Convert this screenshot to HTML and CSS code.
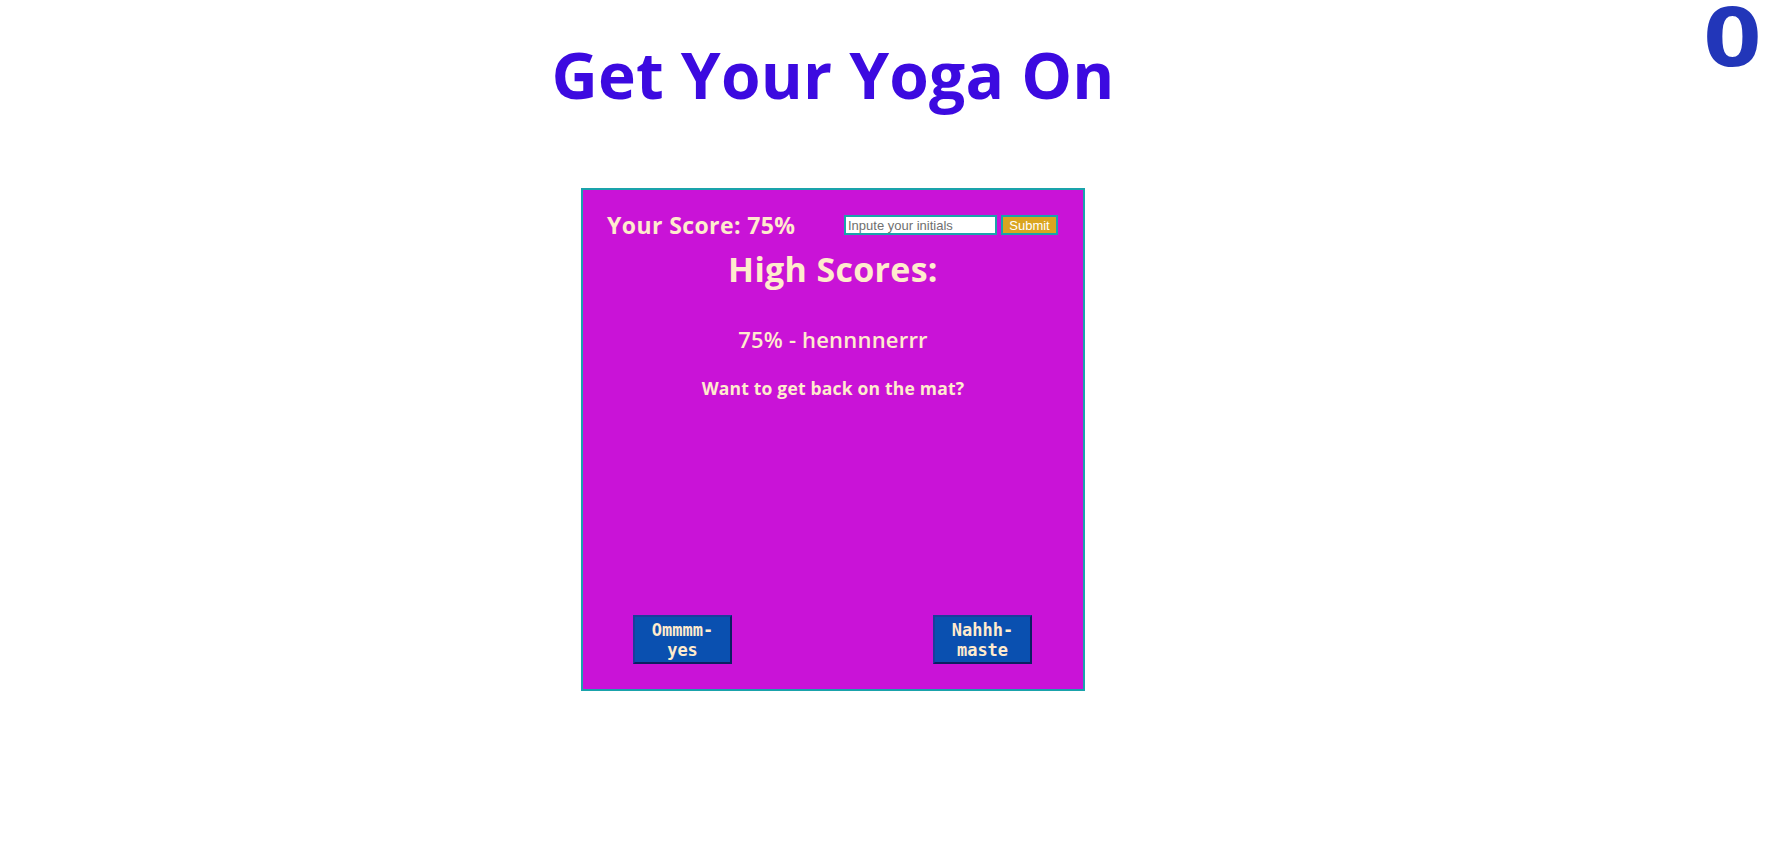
FILE: index.html
```html
<!DOCTYPE html>
<html lang="en">
<head>
<meta charset="utf-8">
<title>Get Your Yoga On</title>
<link rel="stylesheet" href="styles.css">
</head>
<body>
<div class="page">
  <main class="main">
    <h1 class="title">Get Your Yoga On</h1>
    <section class="card">
      <div class="score-row">
        <h3 class="your-score">Your Score: 75%</h3>
        <form class="initials-form">
          <input class="initials-input" type="text" placeholder="Inpute your initials">
          <button class="submit-btn" type="button">Submit</button>
        </form>
      </div>
      <h2 class="high-title">High Scores:</h2>
      <p class="high-entry">75% - hennnnerrr</p>
      <p class="again">Want to get back on the mat?</p>
      <div class="spacer"></div>
      <div class="btn-row">
        <button class="choice-btn" type="button">Ommmm-yes</button>
        <button class="choice-btn" type="button">Nahhh-maste</button>
      </div>
    </section>
  </main>
  <div class="timer"><span class="timer-digit">0</span></div>
</div>
</body>
</html>
```

FILE: styles.css
```css
html, body {
  margin: 0;
  padding: 0;
  background: #ffffff;
}

body {
  padding: 0 8px;
  font-family: "Open Sans", "Liberation Sans", sans-serif;
}

.page {
  display: flex;
  align-items: flex-start;
}

.main {
  flex: 0 0 1650px;
  display: flex;
  flex-direction: column;
  align-items: center;
}

.title {
  margin: 33px 0 0;
  font-size: 64px;
  line-height: 84px;
  font-weight: 700;
  color: #3c0ae0;
  letter-spacing: 0.2px;
}

.timer {
  flex: 1;
  text-align: right;
  font-family: "Open Sans", "Liberation Sans", sans-serif;
  font-weight: 700;
  font-size: 83px;
  line-height: 68px;
  color: #2236b9;
}

.timer-digit {
  display: inline-block;
  transform: scaleX(1.22);
  transform-origin: right center;
  margin-right: 1px;
}

.card {
  margin-top: 71px;
  width: 500px;
  height: 499px;
  background: #c913d7;
  border: 2px solid #1aa3ab;
  display: flex;
  flex-direction: column;
  align-items: center;
  color: #ffebcd;
}

.score-row {
  align-self: stretch;
  display: flex;
  justify-content: space-between;
  align-items: center;
  padding: 22px 25px 0 24px;
}

.your-score {
  margin: 0;
  font-size: 23px;
  line-height: 26px;
  font-weight: 700;
  letter-spacing: 0.4px;
}

.initials-form {
  display: flex;
  gap: 4px;
  margin: 0;
}

.initials-input {
  box-sizing: border-box;
  width: 153px;
  height: 20px;
  margin: 0;
  padding: 0 2px;
  border: 2px solid #1aa3ab;
  background: #ffffff;
  font-family: "Liberation Sans", Arial, sans-serif;
  font-size: 13px;
  color: #333;
  outline: none;
}

.initials-input::placeholder {
  color: #6f6f6f;
}

.submit-btn {
  box-sizing: border-box;
  width: 57px;
  height: 20px;
  margin: 0;
  padding: 0;
  border: 2px solid #1aa3ab;
  background: #daa520;
  color: #ffffff;
  font-family: "Liberation Sans", Arial, sans-serif;
  font-size: 13px;
}

.high-title {
  margin: 11px 0 0;
  font-size: 34px;
  line-height: 40px;
  font-weight: 700;
  letter-spacing: 0.3px;
}

.high-entry {
  margin: 35px 0 0;
  font-size: 22px;
  line-height: 30px;
  font-weight: 600;
  letter-spacing: 0.2px;
}

.again {
  margin: 22px 0 0;
  font-size: 17.5px;
  line-height: 24px;
  font-weight: 700;
  letter-spacing: 0.2px;
}

.spacer {
  flex: 1;
}

.btn-row {
  align-self: stretch;
  display: flex;
  justify-content: space-between;
  padding: 0 51px 25px 50px;
}

.choice-btn {
  box-sizing: border-box;
  width: 99px;
  height: 49px;
  margin: 0;
  padding: 2px 6px;
  background: #0a50b0;
  border: 2px solid;
  border-color: #1b3d9c #0b1f62 #0b1f62 #1b3d9c;
  color: #ffebcd;
  font-family: "DejaVu Sans Mono", "Liberation Mono", monospace;
  font-weight: 700;
  font-size: 17px;
  line-height: 20px;
}
```
